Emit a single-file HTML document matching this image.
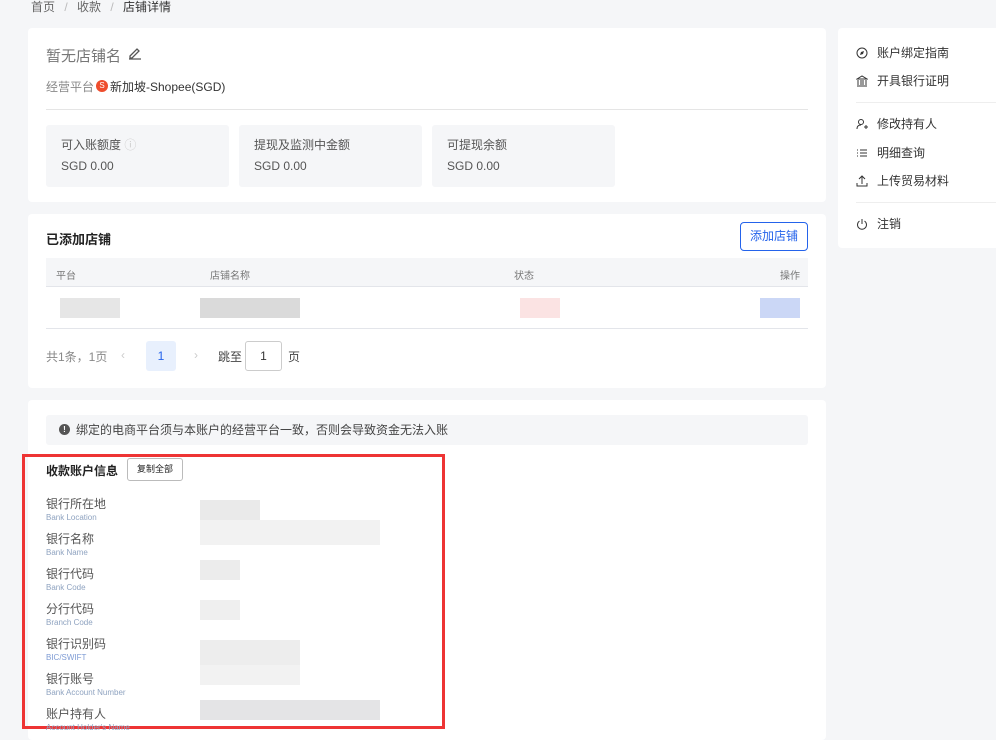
<!DOCTYPE html>
<html><head><meta charset="utf-8"><style>
*{box-sizing:border-box;margin:0;padding:0}
body{width:996px;height:729px;overflow:hidden;background:#f5f6f8;font-family:"Liberation Sans","Noto Sans CJK SC",sans-serif;color:#333;position:relative}
.a{position:absolute}
.card{position:absolute;background:#fff;border-radius:4px}
.t{position:absolute;white-space:nowrap}
.box{position:absolute;background:#f5f6f8;border-radius:3px;width:183px;height:62px;top:97px}
.box .l{position:absolute;left:15px;top:11px;font-size:12px;color:#555}
.box .v{position:absolute;left:15px;top:34px;font-size:12px;color:#555}
.mi{position:absolute;left:18px;font-size:12px;color:#333;display:flex;align-items:center}
.mi svg{margin-right:9px}
.lab{position:absolute;left:24px;font-size:12px;color:#555}
.lab small{display:block;font-size:8px;color:#8fa3c0;line-height:10px;margin-top:1px}
.bl{position:absolute;background:#e8e8e8}
</style></head><body>
<div class="t" style="left:31px;top:-2px;font-size:12px;color:#666">首页 <span style="color:#bbb;margin:0 6px">/</span> 收款 <span style="color:#bbb;margin:0 6px">/</span> <span style="color:#333">店铺详情</span></div>

<div class="card" style="left:28px;top:28px;width:798px;height:174px">
<div class="t" style="left:18px;top:17px;font-size:15px;color:#777">暂无店铺名</div>
<svg class="a" style="left:100px;top:18px" width="14" height="14" viewBox="0 0 14 14"><path d="M2 10l7-7 2 2-7 7H2z M1 13h12" fill="none" stroke="#555" stroke-width="1.3"/></svg>
<div class="t" style="left:18px;top:50px;font-size:12px;color:#888">经营平台</div>
<div class="a" style="left:68px;top:52px;width:12px;height:12px;border-radius:50%;background:#ee4d2d;color:#fff;font-size:8px;text-align:center;line-height:12px">S</div>
<div class="t" style="left:82px;top:50px;font-size:12px;color:#333">新加坡-Shopee(SGD)</div>
<div class="a" style="left:18px;top:81px;width:762px;height:1px;background:#e5e5e5"></div>
<div class="box" style="left:18px"><div class="l">可入账额度 <span style="color:#ccc">ⓘ</span></div><div class="v">SGD 0.00</div></div>
<div class="box" style="left:211px"><div class="l">提现及监测中金额</div><div class="v">SGD 0.00</div></div>
<div class="box" style="left:404px"><div class="l">可提现余额</div><div class="v">SGD 0.00</div></div>
</div>

<div class="card" style="left:838px;top:28px;width:170px;height:220px">
<div class="mi" style="top:16px"><svg width="12" height="12" viewBox="0 0 12 12"><circle cx="6" cy="6" r="5" fill="none" stroke="#333"/><path d="M8 4L5 5 4 8 7 7z" fill="#333"/></svg>账户绑定指南</div>
<div class="mi" style="top:44px"><svg width="12" height="12" viewBox="0 0 12 12"><path d="M1 4L6 1l5 3zM2 5v5M5 5v5M7 5v5M10 5v5M1 11h10" fill="none" stroke="#333"/></svg>开具银行证明</div>
<div class="a" style="left:18px;top:74px;width:160px;height:1px;background:#eee"></div>
<div class="mi" style="top:87px"><svg width="12" height="12" viewBox="0 0 12 12"><circle cx="5" cy="4" r="2.5" fill="none" stroke="#333"/><path d="M1 11c0-3 2-4 4-4M8 9h4M10 7v4" fill="none" stroke="#333"/></svg>修改持有人</div>
<div class="mi" style="top:116px"><svg width="12" height="12" viewBox="0 0 12 12"><path d="M1 3h1M4 3h7M1 6h1M4 6h7M1 9h1M4 9h7" stroke="#333"/></svg>明细查询</div>
<div class="mi" style="top:144px"><svg width="12" height="12" viewBox="0 0 12 12"><path d="M6 9V1M3 4l3-3 3 3M1 8v3h10V8" fill="none" stroke="#333"/></svg>上传贸易材料</div>
<div class="a" style="left:18px;top:174px;width:160px;height:1px;background:#eee"></div>
<div class="mi" style="top:187px"><svg width="12" height="12" viewBox="0 0 12 12"><path d="M3.5 3a4.5 4.5 0 1 0 5 0M6 1v5" fill="none" stroke="#333"/></svg>注销</div>
</div>

<div class="card" style="left:28px;top:214px;width:798px;height:174px">
<div class="t" style="left:18px;top:15px;font-size:13px;font-weight:bold;color:#222">已添加店铺</div>
<div class="a" style="left:712px;top:8px;width:68px;height:29px;border:1px solid #2463eb;border-radius:4px;color:#2463eb;font-size:12px;text-align:center;line-height:27px">添加店铺</div>
<div class="a" style="left:18px;top:44px;width:762px;height:29px;background:#f5f6f8;border-bottom:1px solid #e3e5ea"></div>
<div class="t" style="left:28px;top:53px;font-size:10px;color:#777">平台</div>
<div class="t" style="left:182px;top:53px;font-size:10px;color:#777">店铺名称</div>
<div class="t" style="left:486px;top:53px;font-size:10px;color:#777">状态</div>
<div class="t" style="left:752px;top:53px;font-size:10px;color:#777">操作</div>
<div class="bl" style="left:32px;top:84px;width:60px;height:20px;background:#e6e6e6"></div>
<div class="bl" style="left:172px;top:84px;width:100px;height:20px;background:#dadada"></div>
<div class="bl" style="left:492px;top:84px;width:40px;height:20px;background:#fbe3e3"></div>
<div class="bl" style="left:732px;top:84px;width:40px;height:20px;background:#cbd7f6"></div>
<div class="a" style="left:18px;top:114px;width:762px;height:1px;background:#e3e5ea"></div>
<div class="t" style="left:18px;top:134px;font-size:12px;color:#888">共1条，1页</div>
<div class="t" style="left:93px;top:134px;font-size:12px;color:#ccc">‹</div>
<div class="a" style="left:118px;top:127px;width:30px;height:30px;background:#e8f0fd;border-radius:3px;color:#2463eb;font-size:12px;text-align:center;line-height:30px">1</div>
<div class="t" style="left:166px;top:134px;font-size:12px;color:#ccc">›</div>
<div class="t" style="left:190px;top:134px;font-size:12px;color:#444">跳至</div>
<div class="a" style="left:217px;top:127px;width:37px;height:30px;border:1px solid #ccc;border-radius:3px;font-size:12px;text-align:center;line-height:28px">1</div>
<div class="t" style="left:260px;top:134px;font-size:12px;color:#444">页</div>
</div>

<div class="card" style="left:28px;top:400px;width:798px;height:340px">
<div class="a" style="left:18px;top:15px;width:762px;height:30px;background:#f5f6f8;border-radius:3px"></div>
<div class="a" style="left:31px;top:24px;width:11px;height:11px;border-radius:50%;background:#555;color:#fff;font-size:8px;text-align:center;line-height:11px;font-weight:bold">!</div>
<div class="t" style="left:48px;top:21px;font-size:12px;color:#444">绑定的电商平台须与本账户的经营平台一致，否则会导致资金无法入账</div>
</div>

<div class="a" style="left:22px;top:454px;width:423px;height:275px;border:3px solid #ee3434">
<div class="t" style="left:21px;top:5px;font-size:12px;font-weight:bold;color:#222">收款账户信息</div>
<div class="a" style="left:102px;top:1px;width:56px;height:23px;border:1px solid #bbb;border-radius:3px;font-size:9px;text-align:center;line-height:21px;color:#222">复制全部</div>
<div class="lab" style="left:21px;top:38px">银行所在地<small>Bank Location</small></div>
<div class="lab" style="left:21px;top:73px">银行名称<small>Bank Name</small></div>
<div class="lab" style="left:21px;top:108px">银行代码<small>Bank Code</small></div>
<div class="lab" style="left:21px;top:143px">分行代码<small>Branch Code</small></div>
<div class="lab" style="left:21px;top:178px">银行识别码<small style="color:#7e9bd4">BIC/SWIFT</small></div>
<div class="lab" style="left:21px;top:213px">银行账号<small>Bank Account Number</small></div>
<div class="lab" style="left:21px;top:248px">账户持有人<small>Account Holder's Name</small></div>
<div class="bl" style="left:175px;top:43px;width:60px;height:20px;background:#eaeaea"></div>
<div class="bl" style="left:175px;top:63px;width:180px;height:25px;background:#f2f2f2"></div>
<div class="bl" style="left:175px;top:103px;width:40px;height:20px;background:#ececec"></div>
<div class="bl" style="left:175px;top:143px;width:40px;height:20px;background:#efefef"></div>
<div class="bl" style="left:175px;top:183px;width:100px;height:25px;background:#ededed"></div>
<div class="bl" style="left:175px;top:208px;width:100px;height:20px;background:#f2f2f2"></div>
<div class="bl" style="left:175px;top:243px;width:180px;height:20px;background:#e4e4e6"></div>
</div>
</body></html>
